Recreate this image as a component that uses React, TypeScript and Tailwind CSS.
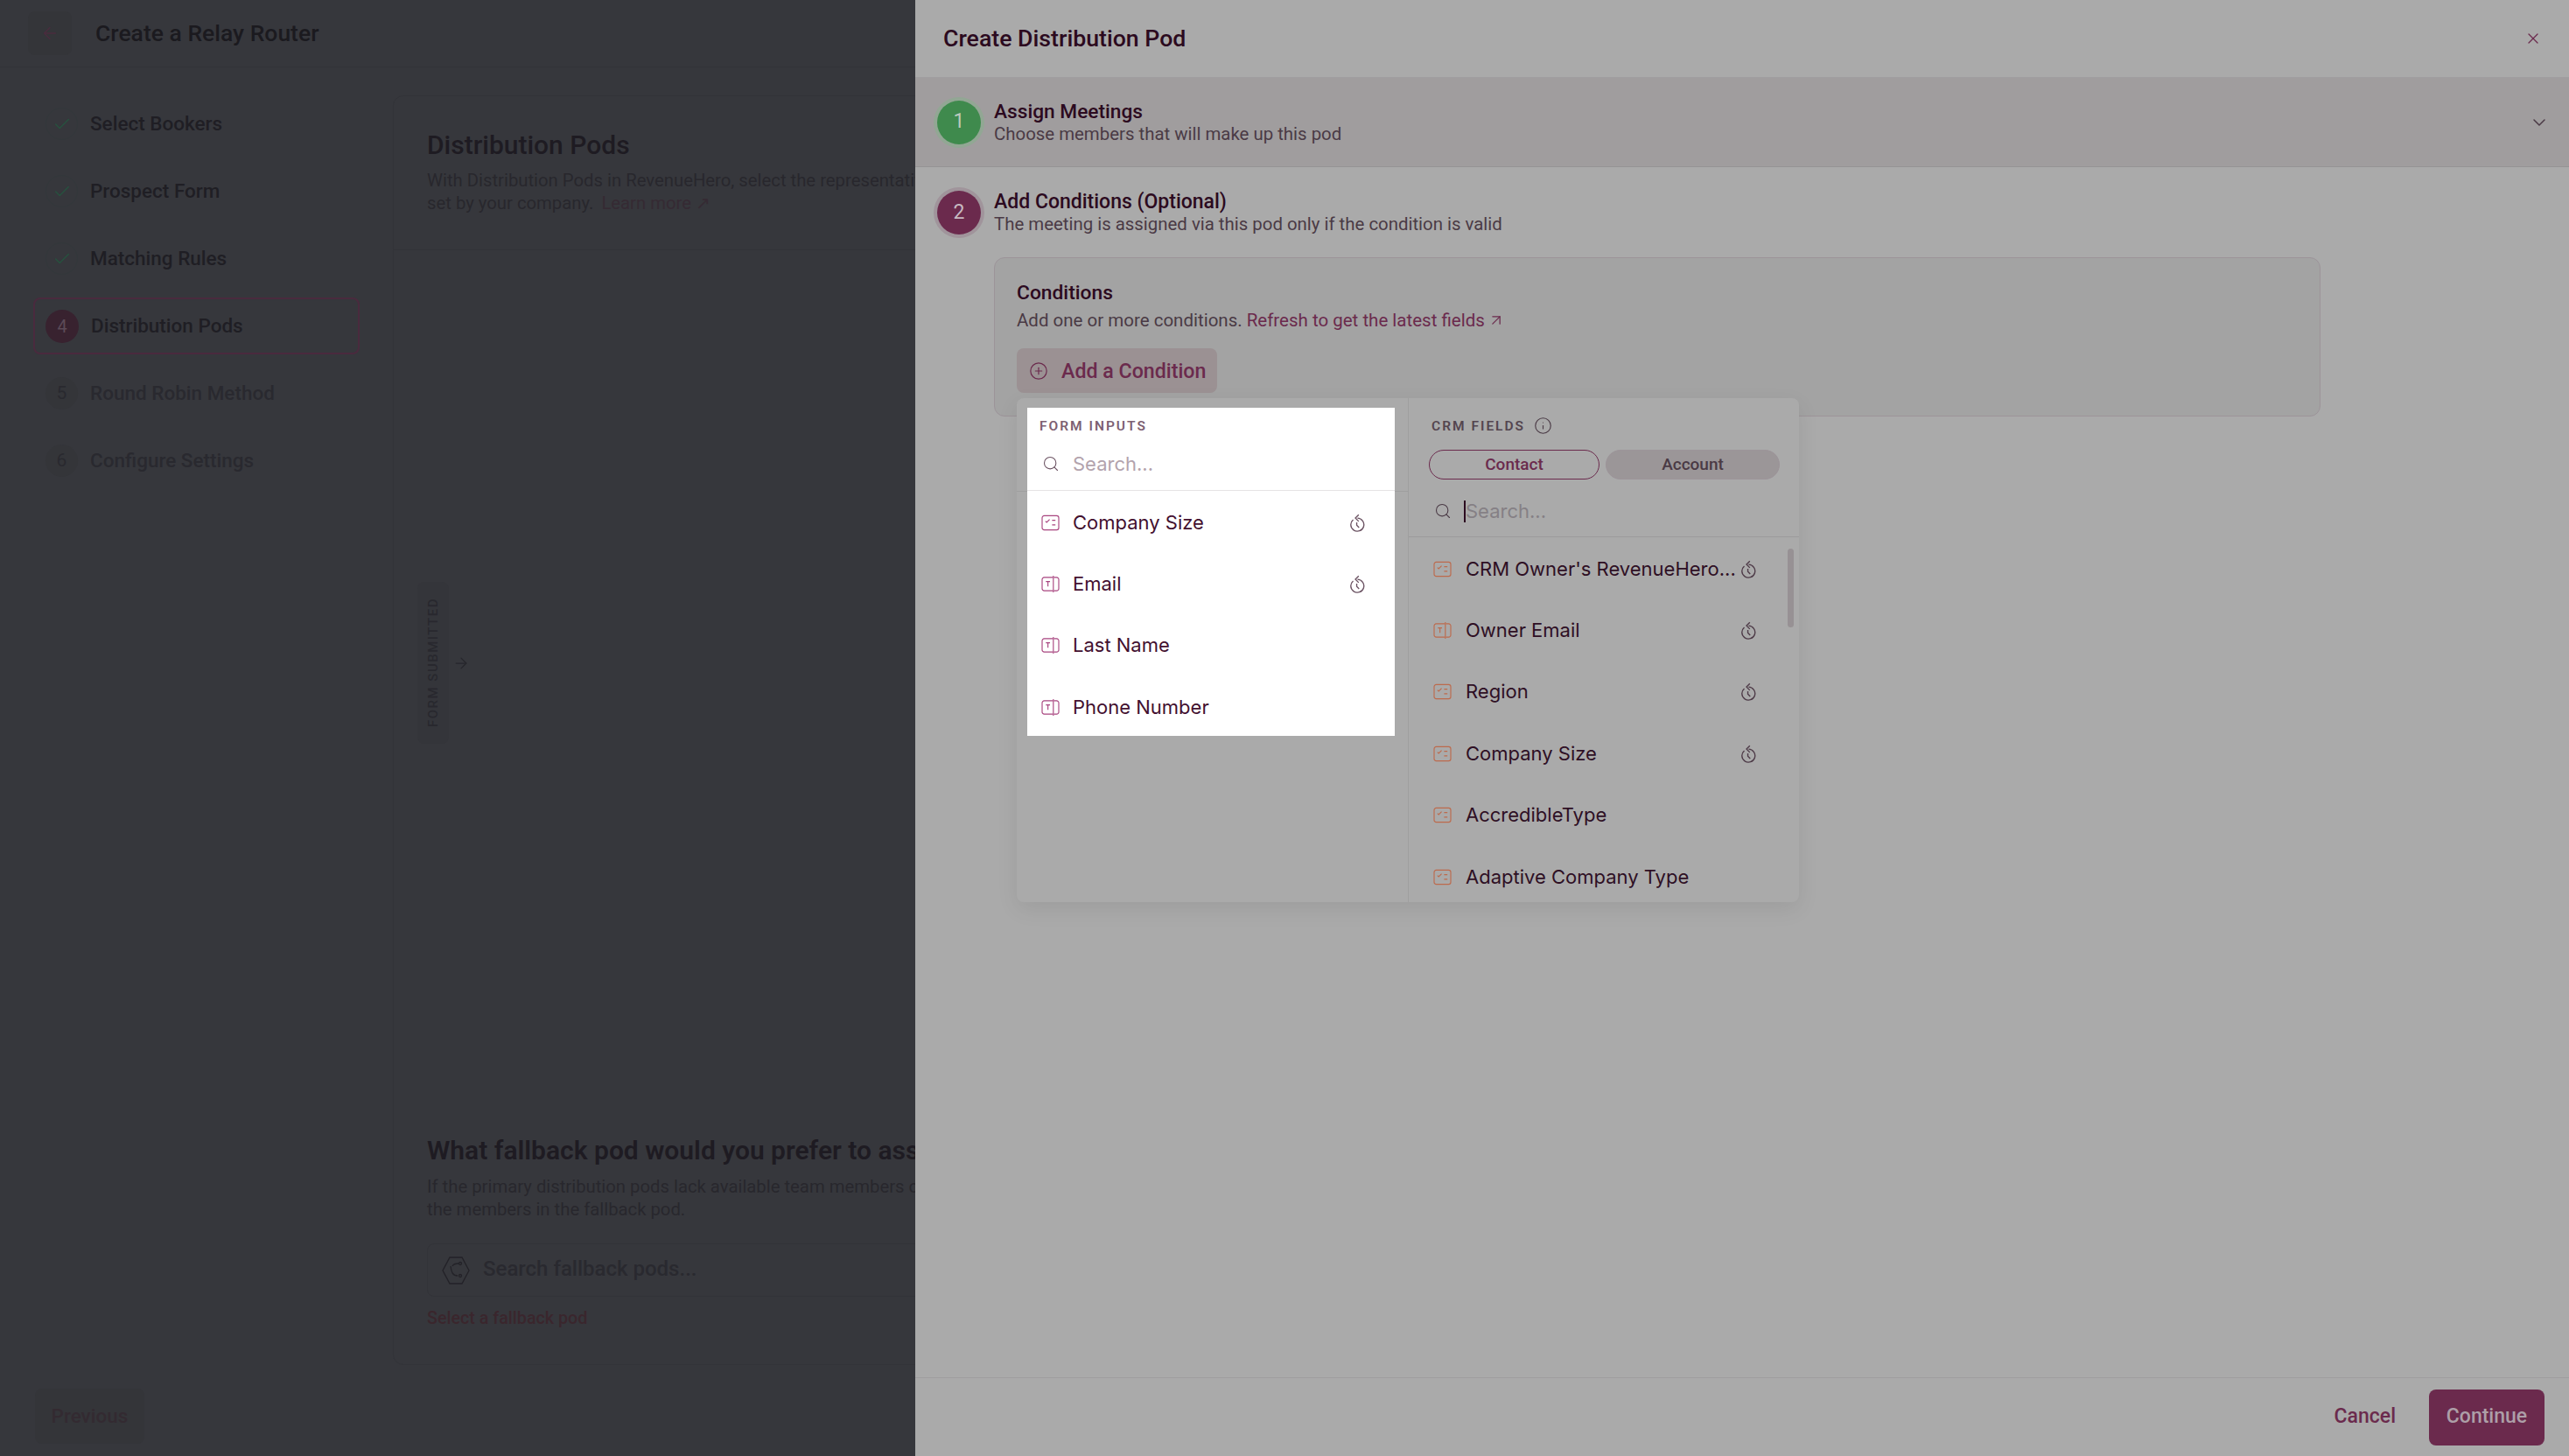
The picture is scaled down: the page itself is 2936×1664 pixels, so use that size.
import { ArrowLeft, ArrowRight, ArrowUpRight, Check, ChevronDown, CirclePlus, Info, Search, X } from "lucide-react";

const steps = [
  { label: "Select Bookers", mark: "done" },
  { label: "Prospect Form", mark: "done" },
  { label: "Matching Rules", mark: "done" },
  { label: "Distribution Pods", mark: "4", active: true },
  { label: "Round Robin Method", mark: "5" },
  { label: "Configure Settings", mark: "6" },
];

const formInputs = [
  { name: "Company Size", type: "select", synced: true },
  { name: "Email", type: "text", synced: true },
  { name: "Last Name", type: "text" },
  { name: "Phone Number", type: "text" },
];

const crmFields = [
  { name: "CRM Owner's RevenueHero...", type: "select", synced: true },
  { name: "Owner Email", type: "text", synced: true },
  { name: "Region", type: "select", synced: true },
  { name: "Company Size", type: "select", synced: true },
  { name: "AccredibleType", type: "select" },
  { name: "Adaptive Company Type", type: "select" },
];

function SelectIcon({ className }: { className: string }) {
  return (
    <svg viewBox="0 0 22 20" fill="none" stroke="currentColor" strokeWidth="1.2" className={className}>
      <rect x="1" y="1.5" width="20" height="17" rx="2.5" />
      <path d="M5 8l1.5 1.5L10 6" />
      <path d="M13 7h4M13 12.5h4" />
    </svg>
  );
}

function TextIcon({ className }: { className: string }) {
  return (
    <svg viewBox="0 0 22 20" fill="none" stroke="currentColor" strokeWidth="1.2" className={className}>
      <path d="M14 2H3.5A2.5 2.5 0 0 0 1 4.5v11A2.5 2.5 0 0 0 3.5 18H14" />
      <path d="M15 2h3.5A2.5 2.5 0 0 1 21 4.5v11a2.5 2.5 0 0 1-2.5 2.5H15" />
      <path d="M14.5 0v20" />
      <path d="M5.5 7h5M8 7v6" />
    </svg>
  );
}

function HistoryIcon({ className }: { className: string }) {
  return (
    <svg viewBox="0 0 20 22" fill="none" stroke="currentColor" strokeWidth="1.5" className={className}>
      <path d="M5 7a8.300 8.300 0 1 0 5.500-1.900" />
      <path d="M12 0.800L7.800 5l4.200 4.200" />
      <path d="M9.500 10.500v3.500l3 3" />
    </svg>
  );
}

function FieldRow({ name, type, synced, dim }: { name: string; type: string; synced?: boolean; dim?: boolean }) {
  const iconClass = dim ? "w-[21px] h-[19px] text-[#bd6a4c] shrink-0" : "w-[21px] h-[19px] text-[#a8447f] shrink-0";
  return (
    <div className="h-[70.4px] shrink-0 flex items-center">
      {type === "select" ? <SelectIcon className={iconClass} /> : <TextIcon className={iconClass} />}
      <span className={dim ? "ml-[16px] text-[22px] text-[#2e0f24] whitespace-nowrap" : "ml-[15px] text-[22px] text-[#43102f] whitespace-nowrap"}>
        {name}
      </span>
      {synced && (
        <HistoryIcon className={dim ? "ml-auto mr-[15px] w-[18px] h-[21px] text-[#4d3a47] shrink-0" : "ml-auto mr-[15px] w-[18px] h-[21px] text-[#6b5262] shrink-0"} />
      )}
    </div>
  );
}

function StepBadge({ n, tone }: { n: number; tone: "green" | "plum" }) {
  return (
    <div
      className={
        tone === "green"
          ? "w-[50px] h-[50px] rounded-full bg-[#3f8a4d] ring-[4px] ring-[#92a794] flex items-center justify-center text-[#bcc9bd] text-[23px] shrink-0"
          : "w-[50px] h-[50px] rounded-full bg-[#6b2a4d] ring-[4px] ring-[#a0949b] flex items-center justify-center text-[#c7b9c1] text-[23px] shrink-0"
      }
    >
      {n}
    </div>
  );
}

export default function App() {
  return (
    <div className="relative w-[2936px] h-screen overflow-hidden bg-[#36373c] font-['Roboto',sans-serif]">
      {/* Page behind the drawer */}
      <div className="flex flex-col h-full">
        <header className="h-[77px] shrink-0 border-b border-[#323338] flex items-center pl-[32px]">
          <div className="w-[50px] h-[50px] rounded-lg bg-[#343539] flex items-center justify-center">
            <ArrowLeft size={22} strokeWidth={1.5} className="text-[#4a2c3e]" />
          </div>
          <span className="ml-[27px] text-[26.5px] font-medium text-[#1b1a1f]">Create a Relay Router</span>
        </header>

        <div className="flex flex-1 min-h-0">
          <aside className="w-[449px] shrink-0 pt-[32px] px-[38px] flex flex-col gap-[12px]">
            {steps.map((step) => (
              <div
                key={step.label}
                className={
                  step.active
                    ? "h-[65px] rounded-lg border-2 border-[#4a2a3e] flex items-center pl-[12px]"
                    : "h-[65px] flex items-center pl-[14px]"
                }
              >
                {step.mark === "done" ? (
                  <div className="w-[37px] h-[37px] rounded-full border border-[#33383b] flex items-center justify-center">
                    <Check size={22} strokeWidth={1.5} className="text-[#27523f]" />
                  </div>
                ) : step.active ? (
                  <div className="w-[38px] h-[38px] rounded-full bg-[#38222f] flex items-center justify-center text-[20px] text-[#5c4b57]">
                    {step.mark}
                  </div>
                ) : (
                  <div className="w-[37px] h-[37px] rounded-full bg-[#343539] flex items-center justify-center text-[21px] text-[#29292f]">
                    {step.mark}
                  </div>
                )}
                <span
                  className={
                    step.mark === "done" || step.active
                      ? "ml-[14px] text-[22.5px] font-medium text-[#1f1e24]"
                      : "ml-[14px] text-[22.5px] font-medium text-[#29292f]"
                  }
                >
                  {step.label}
                </span>
              </div>
            ))}
          </aside>

          <main className="flex-1 min-w-0 mt-[32px] mb-[14px] mr-[32px] border border-[#323338] rounded-xl flex flex-col">
            <section className="h-[176px] shrink-0 border-b border-[#323338] pl-[38px] pt-[38px]">
              <h2 className="text-[30px] font-medium text-[#1e1b22] leading-[36px]">Distribution Pods</h2>
              <p className="mt-[9px] text-[20.3px] leading-[26px] text-[#28272d]">
                With Distribution Pods in RevenueHero, select the representatives who will take meetings
                <br />
                set by your company. <span className="ml-[4px] text-[#352a33]">Learn more ↗</span>
              </p>
            </section>

            <section className="flex-1 flex items-center pl-[27px] pb-[30px]">
              <div className="w-[36px] h-[185px] rounded-lg bg-[#34353a] flex items-center justify-center">
                <span className="[writing-mode:vertical-rl] rotate-180 text-[15px] font-medium tracking-[1.5px] text-[#28282e] whitespace-nowrap">
                  FORM SUBMITTED
                </span>
              </div>
              <ArrowRight size={20} strokeWidth={1.5} className="ml-[4px] text-[#26262c]" />
            </section>

            <section className="h-[300px] shrink-0 pl-[38px] pt-[38px]">
              <h2 className="text-[30px] font-semibold text-[#1e1b22] leading-[36px]">
                What fallback pod would you prefer to assign meetings to?
              </h2>
              <p className="mt-[10px] text-[20.3px] leading-[26px] text-[#28272d]">
                If the primary distribution pods lack available team members or capacity, meetings go to
                <br />
                the members in the fallback pod.
              </p>
              <div className="mt-[26px] h-[61px] w-[900px] rounded-lg border border-[#323338] flex items-center pl-[16px]">
                <svg viewBox="0 0 32 34" fill="none" stroke="#232228" strokeWidth="1.3" className="w-[32px] h-[34px]">
                  <path d="M9 2h14l8 15-8 15H9L1 17z" />
                  <path d="M10 12c1 8 3 11 8 11M12 12c1-2 4-3 7-3" />
                  <circle cx="21" cy="9" r="1.5" />
                  <circle cx="21" cy="23" r="1.5" />
                </svg>
                <span className="ml-[15px] -mt-[3px] text-[24px] font-medium text-[#29292f]">Search fallback pods...</span>
              </div>
              <p className="mt-[10px] text-[19.7px] font-medium text-[#3a262d]">Select a fallback pod</p>
            </section>
          </main>
        </div>

        <footer className="h-[90px] shrink-0 pl-[40px] pt-[13px]">
          <div className="w-[125px] h-[63px] rounded-lg bg-[#343539] flex items-center justify-center text-[22.5px] font-medium text-[#332a31]">
            Previous
          </div>
        </footer>
      </div>

      {/* Drawer */}
      <div className="absolute top-0 right-0 bottom-0 w-[1890px] bg-[#aaaaaa] flex flex-col">
        <div className="h-[89px] shrink-0 border-b border-[#a09ea0] flex items-center justify-between pl-[32px] pr-[31px]">
          <h1 className="text-[26.7px] font-medium text-[#2c0a20]">Create Distribution Pod</h1>
          <X size={20} strokeWidth={1.5} className="text-[#6b2a4d]" />
        </div>

        <div className="h-[102px] shrink-0 bg-[#a09d9e] border-b border-[#959394] flex items-center pl-[25px] pr-[22px]">
          <StepBadge n={1} tone="green" />
          <div className="ml-[15px] flex flex-col pt-[1px]">
            <span className="text-[22.7px] leading-[26px] font-medium text-[#2c0a20]">Assign Meetings</span>
            <span className="text-[20.4px] leading-[25px] text-[#4a3a45]">Choose members that will make up this pod</span>
          </div>
          <ChevronDown size={24} strokeWidth={1.5} className="ml-auto text-[#4a3a45]" />
        </div>

        <div className="flex-1 min-h-0 pl-[25px] pt-[27px]">
          <div className="flex items-center h-[50px]">
            <StepBadge n={2} tone="plum" />
            <div className="ml-[15px] flex flex-col pt-[1px]">
              <span className="text-[23px] leading-[26px] font-medium text-[#2c0a20]">Add Conditions (Optional)</span>
              <span className="text-[20.4px] leading-[25px] text-[#4a3a45]">The meeting is assigned via this pod only if the condition is valid</span>
            </div>
          </div>

          <div className="relative ml-[65px] mt-[26px] w-[1516px] h-[182px] rounded-xl border border-[#9c9499] bg-[#a3a3a3] pl-[25px] pt-[26px]">
            <h3 className="text-[22.8px] leading-[28px] font-medium text-[#2c0a20]">Conditions</h3>
            <p className="mt-[4px] text-[20.5px] leading-[26px] text-[#4a3a45]">
              Add one or more conditions.{" "}
              <span className="text-[#6b2a4d]">
                Refresh to get the latest fields
                <ArrowUpRight size={20} strokeWidth={1.5} className="inline ml-[3px] align-[-3px]" />
              </span>
            </p>
            <button className="mt-[19px] w-[229px] h-[51px] rounded-lg bg-[#9b9193] flex items-center pl-[14px] text-[23.2px] font-medium text-[#6b2a4d]">
              <CirclePlus size={22} strokeWidth={1.3} />
              <span className="ml-[15px] mt-[1px]">Add a Condition</span>
            </button>

            {/* Field picker popup */}
            <div className="absolute left-[25px] top-[160px] w-[894px] h-[576px] rounded-lg bg-[#aaaaaa] shadow-[0_8px_24px_rgba(0,0,0,0.08)] flex overflow-hidden font-['Inter',sans-serif]">
              <div className="relative w-[448px] shrink-0 border-r border-[#9f9f9f] pl-[12px] pt-[11px]">
                <div className="absolute left-0 right-0 top-[106px] h-px bg-[#9f9f9f]" />
                <div className="relative w-[420px] h-[375px] bg-white overflow-hidden">
                  <div className="h-[95px] border-b border-[#e6e3e5] px-[14px]">
                    <p className="pt-[11px] text-[15.5px] leading-[20px] font-semibold tracking-[2px] text-[#7d6072] font-['Roboto',sans-serif]">
                      FORM INPUTS
                    </p>
                    <div className="mt-[20px] pl-[3px] flex items-center">
                      <Search size={20} strokeWidth={1.3} className="text-[#6b5262]" />
                      <span className="ml-[15px] text-[22px] leading-[26px] text-[#b3a3ad]">Search...</span>
                    </div>
                  </div>
                  <div className="pl-[16px] pr-[19px] pt-[1px] flex flex-col">
                    {formInputs.map((field) => (
                      <FieldRow key={field.name} {...field} />
                    ))}
                  </div>
                </div>
              </div>

              <div className="relative flex-1 min-w-0 flex flex-col">
                <div className="h-[159px] shrink-0 border-b border-[#9c9a9b] px-[26px]">
                  <div className="pt-[21px] flex items-center">
                    <span className="text-[15.5px] leading-[20px] font-semibold tracking-[2px] text-[#54454f] font-['Roboto',sans-serif]">CRM FIELDS</span>
                    <Info size={21} strokeWidth={1.3} className="ml-[10px] text-[#4a3a45]" />
                  </div>
                  <div className="mt-[17px] -ml-[3px] flex gap-[7px]">
                    <div className="w-[195px] h-[34px] shrink-0 rounded-full border border-[#6b2a4d] flex items-center justify-center text-[19px] font-['Roboto',sans-serif] font-medium text-[#6b2a4d]">
                      Contact
                    </div>
                    <div className="w-[199px] h-[34px] shrink-0 rounded-full border border-[#9c9499] bg-[#9b9698] flex items-center justify-center text-[19px] font-['Roboto',sans-serif] font-medium text-[#4a3a45]">
                      Account
                    </div>
                  </div>
                  <div className="mt-[23px] pl-[3px] flex items-center">
                    <Search size={20} strokeWidth={1.3} className="text-[#4a3a45]" />
                    <span className="ml-[14px] w-[2px] h-[25px] bg-[#2c0a20]" />
                    <span className="text-[22px] leading-[26px] text-[#858085]">Search...</span>
                  </div>
                </div>
                <div className="flex-1 min-h-0 overflow-hidden pl-[28px] pr-[34px] pt-[1px] flex flex-col">
                  {crmFields.map((field) => (
                    <FieldRow key={field.name} {...field} dim />
                  ))}
                </div>
                <div className="absolute right-[6px] top-[172px] w-[7px] h-[90px] rounded-full bg-[#979194]" />
              </div>
            </div>
          </div>
        </div>

        <div className="h-[90px] shrink-0 border-t border-[#9f9e9f] flex items-center justify-end pr-[28px]">
          <span className="text-[23px] font-medium text-[#6b2a4d]">Cancel</span>
          <div className="ml-[38px] w-[132px] h-[64px] rounded-lg bg-[#6b2a4d] flex items-center justify-center text-[23px] font-medium text-[#ad9fa8]">
            Continue
          </div>
        </div>
      </div>
    </div>
  );
}
